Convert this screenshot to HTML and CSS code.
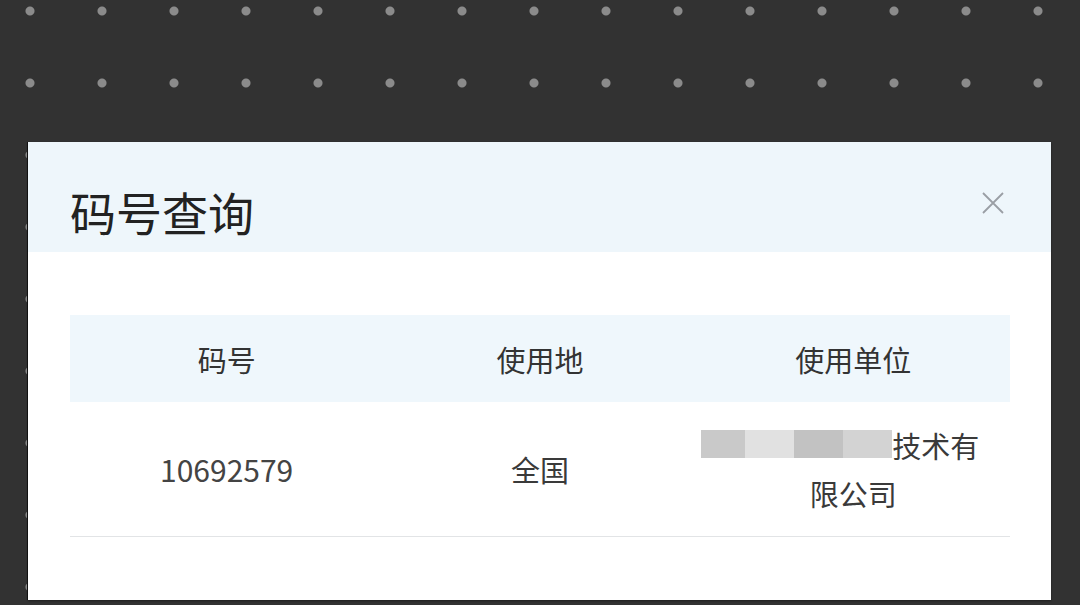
FILE: index.html
```html
<!DOCTYPE html>
<html lang="zh-CN">
<head>
    <meta charset="UTF-8">
    <meta name="viewport" content="width=device-width, initial-scale=1.0">
    <title>码号查询</title>
    <link rel="stylesheet" href="styles.css">
</head>
<body>
    <div class="modal">
        <!-- 标题栏 -->
        <div class="modal-header">
            <h2>码号查询</h2>
            <button class="close-button" title="关闭">
                <svg width="22" height="22" viewBox="0 0 22 22">
                    <path d="M1 1 L21 21 M21 1 L1 21" stroke="#9a9ea4" stroke-width="1.8" fill="none"/>
                </svg>
            </button>
        </div>

        <!-- 查询结果 -->
        <div class="modal-body">
            <table class="result-table">
                <thead>
                    <tr>
                        <th>码号</th>
                        <th>使用地</th>
                        <th>使用单位</th>
                    </tr>
                </thead>
                <tbody>
                    <tr>
                        <td class="num">10692579</td>
                        <td>全国</td>
                        <td class="unit">
                            <span class="first-line"><span class="masked"><i class="m1"></i><i class="m2"></i><i class="m3"></i><i class="m4"></i></span>技术有</span><br>限公司
                        </td>
                    </tr>
                </tbody>
            </table>
        </div>
    </div>
</body>
</html>
```

FILE: styles.css
```css
body {
    margin: 0;
    padding: 142px 0 0 28px;
    height: 605px;
    box-sizing: border-box;
    overflow: hidden;
    font-family: "Noto Sans CJK SC", "Microsoft YaHei", sans-serif;
    background-color: #323232;
    background-image: radial-gradient(circle, #8b8b8b 4px, transparent 5px);
    background-size: 72px 72px;
    background-position: -6px -25px;
}
.modal {
    width: 1023px;
    height: 458px;
    background-color: #fff;
    box-shadow: -1px 0 0 #111, 0 1px 2px rgba(0, 0, 0, 0.4);
}
.modal-header {
    height: 110px;
    box-sizing: border-box;
    padding: 40px 47px 0 42px;
    display: flex;
    justify-content: space-between;
    align-items: flex-start;
    background-color: #eef6fb;
}
.modal-header h2 {
    margin: 0;
    font-size: 46px;
    font-weight: 400;
    line-height: 58px;
    color: #222;
}
.close-button {
    margin-top: 10px;
    padding: 0;
    border: none;
    background: none;
    cursor: pointer;
    line-height: 0;
}
.modal-body {
    padding: 63px 41px 0 42px;
}
.result-table {
    width: 940px;
    border-collapse: collapse;
    table-layout: fixed;
    color: #3a3a3a;
    font-size: 29px;
}
.result-table th {
    height: 87px;
    padding: 0;
    font-weight: 400;
    color: #333;
    background-color: #eff7fc;
}
.result-table td {
    height: 134px;
    padding: 0 10px;
    text-align: center;
    line-height: 48px;
    border-bottom: 1px solid #e2e4e6;
}
.result-table td.num {
    font-size: 30px;
    color: #444;
}
.result-table td.unit {
    padding: 0;
}
.first-line {
    display: inline-block;
    white-space: nowrap;
    padding-right: 26px;
}
.masked {
    display: inline-flex;
    vertical-align: 0;
    height: 28px;
}
.masked i {
    display: block;
    height: 28px;
}
.m1 { width: 44px; background-color: #c9c9c9; }
.m2 { width: 49px; background-color: #e1e1e1; }
.m3 { width: 49px; background-color: #c2c2c2; }
.m4 { width: 49px; background-color: #d3d3d3; }
```
